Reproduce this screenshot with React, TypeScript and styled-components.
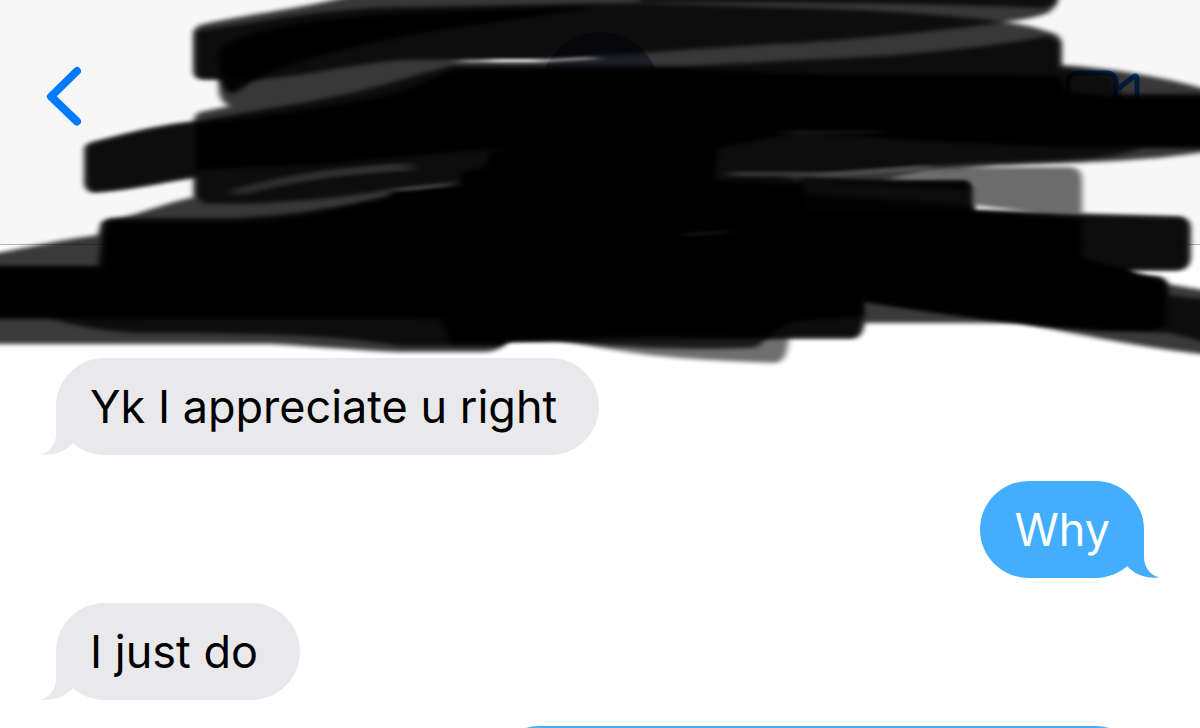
import React from "react";
import styled, { createGlobalStyle } from "styled-components";

const GlobalStyle = createGlobalStyle`
  * { box-sizing: border-box; }
  body {
    margin: 0;
    background: #fff;
    font-family: Inter, "Liberation Sans", sans-serif;
  }
`;

const Screen = styled.main`
  display: flex;
  flex-direction: column;
  height: 100vh;
  overflow: hidden;
  background: #fff;
`;

const Header = styled.header`
  position: relative;
  flex: none;
  display: grid;
  grid-template-columns: 1fr auto 1fr;
  align-items: center;
  padding: 32px 60px 92px 40px;
  background: #f7f7f8;
  border-bottom: 1px solid #b4b4b6;
`;

const IconButton = styled.button<{ $end?: boolean }>`
  display: flex;
  justify-self: ${(p) => (p.$end ? "end" : "start")};
  padding: 0;
  border: 0;
  background: none;
  color: #007aff;
`;

const Avatar = styled.div`
  width: 120px;
  height: 120px;
  margin-left: 20px;
  border-radius: 50%;
  background: #858aa8;
`;

const Marker = styled.svg`
  position: absolute;
  top: 0;
  left: 0;
  width: 100%;
  height: 370px;
  pointer-events: none;
`;

const Messages = styled.ol`
  display: flex;
  flex-direction: column;
  margin: 0;
  padding: 88px 56px 0;
  list-style: none;
`;

const Bubble = styled.li<{ $sent?: boolean; $wide?: boolean }>`
  position: relative;
  flex: none;
  align-self: ${(p) => (p.$sent ? "flex-end" : "flex-start")};
  width: ${(p) => (p.$wide ? "60%" : "auto")};
  min-height: 97px;
  margin-top: ${(p) => (p.$sent ? 26 : 25)}px;
  padding: ${(p) => (p.$sent ? "21px 34px 20px" : "21px 42px 20px 34px")};
  border-radius: 49px;
  background: ${(p) => (p.$sent ? "#43aefd" : "#e9e9eb")};
  color: ${(p) => (p.$sent ? "#fff" : "#000")};
  font-size: 45px;
  line-height: 56px;
`;

const TailShape = styled.svg<{ $sent?: boolean }>`
  position: absolute;
  bottom: 0;
  ${(p) => (p.$sent ? "right: -15px; transform: scaleX(-1);" : "left: -15px;")}
  width: 36px;
  height: 50px;
  fill: ${(p) => (p.$sent ? "#43aefd" : "#e9e9eb")};
`;

function Message({ sent, wide, children }: { sent?: boolean; wide?: boolean; children?: React.ReactNode }) {
  return (
    <Bubble $sent={sent} $wide={wide}>
      {children}
      <TailShape $sent={sent} viewBox="0 0 36 50" aria-hidden="true">
        <path d="M15 0V29C15 39 9 47 0 49.500C12 51 24 47 32 38L36 30V0Z" />
      </TailShape>
    </Bubble>
  );
}

function Redaction() {
  return (
    <Marker viewBox="0 0 1200 370" preserveAspectRatio="none" aria-hidden="true">
      <defs>
        <filter id="soft" x="-5%" y="-5%" width="110%" height="110%">
          <feGaussianBlur stdDeviation="3.200 2" />
        </filter>
        <filter id="streak" x="-10%" y="-100%" width="120%" height="300%">
          <feGaussianBlur stdDeviation="8 1.600" />
        </filter>
      </defs>
      {/* lightest strokes */}
      <g filter="url(#soft)" opacity=".56">
        <path d="M880 179L960 167H1070Q1082 168 1082 180V214L1035 213L973 205V184Q970 180 960 180Z" />
        <path d="M550 338C590 345 620 353 680 358C720 361 750 362 775 363Q788 362 789 335Z" />
      </g>
      {/* single pass of the marker */}
      <path
        filter="url(#soft)"
        opacity=".77"
        d="M370 -9C310 8 240 15 200 25Q194 27 194 35V72Q195 79 202 79H219V92Q221 103 230 106L200 112Q194 114 194 122C150 126 120 136 92 142Q85 144 85 151V184Q86 192 93 192C130 190 160 182 194 176V197C165 203 145 212 125 217L102 222L98 235C60 240 30 247 -9 254V344H270C310 346 350 350 400 352H485Q500 352 507 341H550L780 338H852Q861 337 863 323H1020C1080 334 1130 346 1209 355V291L1168 284Q1166 278 1158 277L1132 276L1128 270H1178Q1190 268 1190 255V226Q1188 217 1178 217L1082 214L973 211V188Q972 180 963 180H885C920 172 960 168 1000 165C1060 163 1150 162 1209 151V90C1160 76 1110 68 1061 65V42Q1060 34 1050 32C1030 26 1020 24 1003 22C1020 20 1035 18 1048 13Q1058 8 1058 -9Z"
      />
      {/* second pass */}
      <g filter="url(#soft)" opacity=".76">
        <path d="M195 31C260 23 300 10 400 7L640 3L800 8C880 10 950 15 1003 22C950 30 880 37 800 43C700 47 640 55 540 59L400 60C340 66 300 77 260 79H202Q195 78 195 70Z" />
        <path d="M640 -9H1056V3L1044 8C960 4 800 2 640 2Z" />
        <path d="M86 146C120 136 150 128 194 122C260 108 330 102 400 80L450 66H690L800 60C890 57 980 49 1048 36L1060 42V68L1113 75L1120 94H1209V148H1140C1120 158 1060 161 1000 163C920 164 850 174 780 177L805 180H965Q973 181 973 190V211L1082 215L1180 217Q1189 219 1189 228V260Q1188 270 1176 270H1128L1132 277H1158Q1167 279 1168 295L1209 300V343L1170 333L1100 330C1040 326 950 315 863 301V325Q861 338 852 338H789L765 339Q760 348 750 348C680 350 620 348 560 341H510L500 346H400C330 335 270 333 140 333Q90 331 50 318H-9V266H98L103 225Q104 218 112 218H230C300 215 350 206 400 193L475 182V160L400 166L200 172L195 178C160 182 130 190 92 192L86 185Z" />
        <path d="M196 168L400 158L500 150V178L465 181L400 188C340 198 270 206 203 203L196 196Z" />
      </g>
      {/* dense core */}
      <g filter="url(#soft)">
        <path opacity=".93" d="M219 55Q219 47 230 42C270 26 310 20 400 13L600 6C540 18 440 28 400 37C330 52 270 65 237 92Q227 97 221 82Z" />
        <path opacity=".96" d="M196 124C300 112 350 104 400 92L455 69H690L800 74L1060 76L1066 92L1120 97H1204V146H1140C1060 150 930 142 800 132L718 148L714 180L805 184V211H970L1082 219V258L1130 270L1158 280Q1166 282 1166 292V326L1150 330H1100C1040 326 950 315 863 301V316L790 322L765 338L640 336L510 341L498 344H450L442 320L420 318H-9V268H103L107 222H240C300 220 350 206 388 198L392 192L458 184L462 172L486 166L490 152L515 147L400 157L330 164L196 170Z" />
        <path opacity=".7" d="M805 193L973 205V212H805ZM800 176L885 182H968V190L800 182Z" />
      </g>
      {/* thin gaps between strokes */}
      <g filter="url(#streak)" fill="none" stroke="#fff">
        <path d="M460 61H540L595 58" opacity=".5" strokeWidth="3" />
        <path d="M490 60.500H540" opacity=".8" strokeWidth="3" />
        <path d="M400 190L452 185" opacity=".2" strokeWidth="3" />
        <path d="M235 193C280 180 340 170 410 167" opacity=".14" strokeWidth="8" />
        <path d="M730 174H830L930 167" opacity=".16" strokeWidth="5" />
        <path d="M685 235L725 232" opacity=".12" strokeWidth="2" />
        <path d="M780 132H880" opacity=".07" strokeWidth="3" />
      </g>
    </Marker>
  );
}

export default function App() {
  return (
    <>
      <GlobalStyle />
      <Screen>
        <Header>
          <IconButton type="button" aria-label="Back">
            <svg width="48" height="68" viewBox="0 0 48 68" fill="none" stroke="currentColor" strokeWidth="8" strokeLinecap="round" strokeLinejoin="round">
              <path d="M37 13L11 38.500L37 63.500" />
            </svg>
          </IconButton>
          <Avatar />
          <IconButton type="button" $end aria-label="Video call">
            <svg width="76" height="44" viewBox="0 0 76 44" fill="none" stroke="currentColor" strokeWidth="5" strokeLinejoin="round">
              <rect x="4" y="3" width="48" height="39" rx="9" />
              <path d="M54 19L69 7Q73 4 73 9V36Q73 40 69 38L54 27" />
            </svg>
          </IconButton>
          <Redaction />
        </Header>
        <Messages>
          <Message>Yk I appreciate u right</Message>
          <Message sent>Why</Message>
          <Message>I just do</Message>
          <Message sent wide />
        </Messages>
      </Screen>
    </>
  );
}
